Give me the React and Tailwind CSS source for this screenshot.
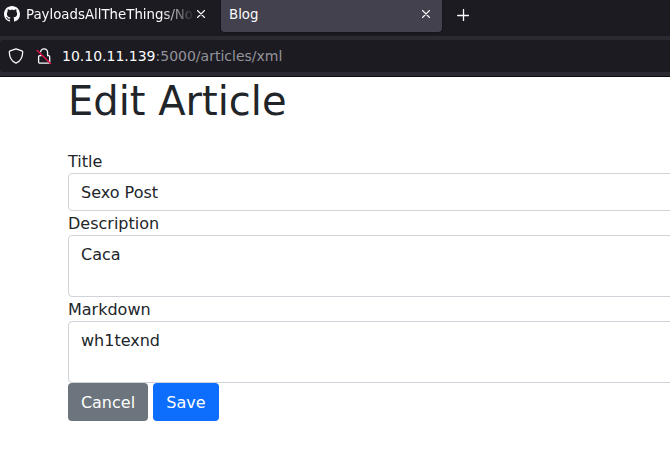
import React from "react";

function GitHubMark() {
  return (
    <svg width="16" height="16" viewBox="0 0 16 16" fill="#fbfbfe" className="shrink-0">
      <path d="M8 0C3.58 0 0 3.58 0 8c0 3.54 2.29 6.53 5.47 7.59.4.07.55-.17.55-.38 0-.19-.01-.82-.01-1.49-2.01.37-2.53-.49-2.69-.94-.09-.23-.48-.94-.82-1.13-.28-.15-.68-.52-.01-.53.63-.01 1.08.58 1.23.82.72 1.21 1.87.87 2.33.66.07-.52.28-.87.51-1.07-1.78-.2-3.64-.89-3.64-3.95 0-.87.31-1.59.82-2.15-.08-.2-.36-1.02.08-2.12 0 0 .67-.21 2.2.82.64-.18 1.32-.27 2-.27s1.36.09 2 .27c1.53-1.04 2.2-.82 2.2-.82.44 1.1.16 1.92.08 2.12.51.56.82 1.27.82 2.15 0 3.07-1.87 3.75-3.65 3.95.29.25.54.73.54 1.48 0 1.07-.01 1.93-.01 2.2 0 .21.15.46.55.38A8.01 8.01 0 0 0 16 8c0-4.42-3.58-8-8-8z" />
    </svg>
  );
}

function CloseIcon() {
  return (
    <svg width="8" height="8" viewBox="0 0 8 8" fill="none" stroke="#fbfbfe" strokeWidth="1.1" strokeLinecap="round" className="shrink-0">
      <path d="M.5.5l7 7M7.5.5l-7 7" />
    </svg>
  );
}

function ShieldIcon() {
  return (
    <svg width="16" height="16" viewBox="0 0 16 16" fill="none" stroke="#fbfbfe" strokeWidth="1.3" strokeLinejoin="round" className="shrink-0">
      <path d="M8 .8L13.9 2.9C14.4 3.1 14.7 3.5 14.7 4C14.6 9 12.6 13.2 8 15.2C3.4 13.2 1.4 9 1.3 4C1.3 3.5 1.6 3.1 2.1 2.9Z" />
    </svg>
  );
}

function InsecureLockIcon() {
  return (
    <svg width="16" height="16" viewBox="0 0 16 16" fill="none" className="shrink-0">
      <path d="M4.6 4.2a3.5 3.5 0 0 1 7 .2v3.2h.9a1.2 1.2 0 0 1 1.2 1.2v5.1a1.2 1.2 0 0 1-1.2 1.2H3.8a1.2 1.2 0 0 1-1.2-1.2V8.8a1.2 1.2 0 0 1 1.2-1.2h1.8" stroke="#fbfbfe" strokeWidth="1.3" />
      <path d="M1.3 2.5L14.5 15.5" stroke="#e2144c" strokeWidth="1.5" strokeLinecap="round" />
    </svg>
  );
}

function TabStrip() {
  return (
    <div className="flex h-9 items-start bg-[#1c1b22] text-[13.33px] text-[#fbfbfe]">
      <div className="flex h-7 w-[221px] items-center pl-1">
        <GitHubMark />
        <span className="ml-1.5 w-[167px] overflow-hidden pt-0.5 whitespace-nowrap [mask-image:linear-gradient(to_right,black_135px,transparent_169px)]">
          PayloadsAllTheThings/NoS
        </span>
        <span className="ml-1">
          <CloseIcon />
        </span>
      </div>
      <div className="flex h-8 w-[221px] items-center justify-between rounded-b bg-[#42414d] pr-3 pb-1 pl-2 shadow-[0_0_3px_rgba(0,0,0,0.5)]">
        <span className="pt-0.5">Blog</span>
        <CloseIcon />
      </div>
      <svg width="12" height="12" viewBox="0 0 12 12" fill="none" stroke="#fbfbfe" strokeWidth="1.3" strokeLinecap="round" className="mt-[9px] ml-[15px]">
        <path d="M6.5.6v11.2M.7 6.5h11" />
      </svg>
    </div>
  );
}

function AddressBar() {
  return (
    <div className="h-[41px] border-b border-[#0c0c0d] bg-[#2b2a33] py-1 text-[14px]">
      <div className="flex h-8 items-center rounded-l bg-[#1c1b22] pl-2">
        <ShieldIcon />
        <span className="ml-3">
          <InsecureLockIcon />
        </span>
        <span className="ml-[10px] text-[#94939b]">
          <span className="text-[#fbfbfe]">10.10.11.139</span>:5000/articles/xml
        </span>
      </div>
    </div>
  );
}

const labelClass = "block h-6 leading-[26px]";
const fieldClass =
  "block w-full resize-none rounded border border-[#ced4da] bg-white px-3 pt-[7px] pb-[5px] text-base leading-6 text-[#212529] outline-none";

export default function App() {
  return (
    <div className="h-[460px] w-[670px] overflow-hidden bg-white font-['DejaVu_Sans',sans-serif]">
      <header className="leading-5">
        <TabStrip />
        <AddressBar />
      </header>
      <main className="ml-[68px] w-[700px] text-base text-[#212529]">
        <h1 className="mb-6 text-[40px] leading-[48px]">Edit Article</h1>
        <form>
          <label htmlFor="title" className={labelClass}>Title</label>
          <input id="title" defaultValue="Sexo Post" className={fieldClass} />
          <label htmlFor="description" className={labelClass}>Description</label>
          <textarea id="description" defaultValue="Caca" className={`${fieldClass} h-[62px]`} />
          <label htmlFor="markdown" className={labelClass}>Markdown</label>
          <textarea id="markdown" defaultValue="wh1texnd" className={`${fieldClass} h-[62px]`} />
          <div className="flex gap-[5px]">
            <button type="button" className="h-[38px] w-20 rounded bg-[#6c757d] pt-0.5 leading-6 text-white">Cancel</button>
            <button type="button" className="h-[38px] w-[66px] rounded bg-[#0d6efd] pt-0.5 leading-6 text-white">Save</button>
          </div>
        </form>
      </main>
    </div>
  );
}
